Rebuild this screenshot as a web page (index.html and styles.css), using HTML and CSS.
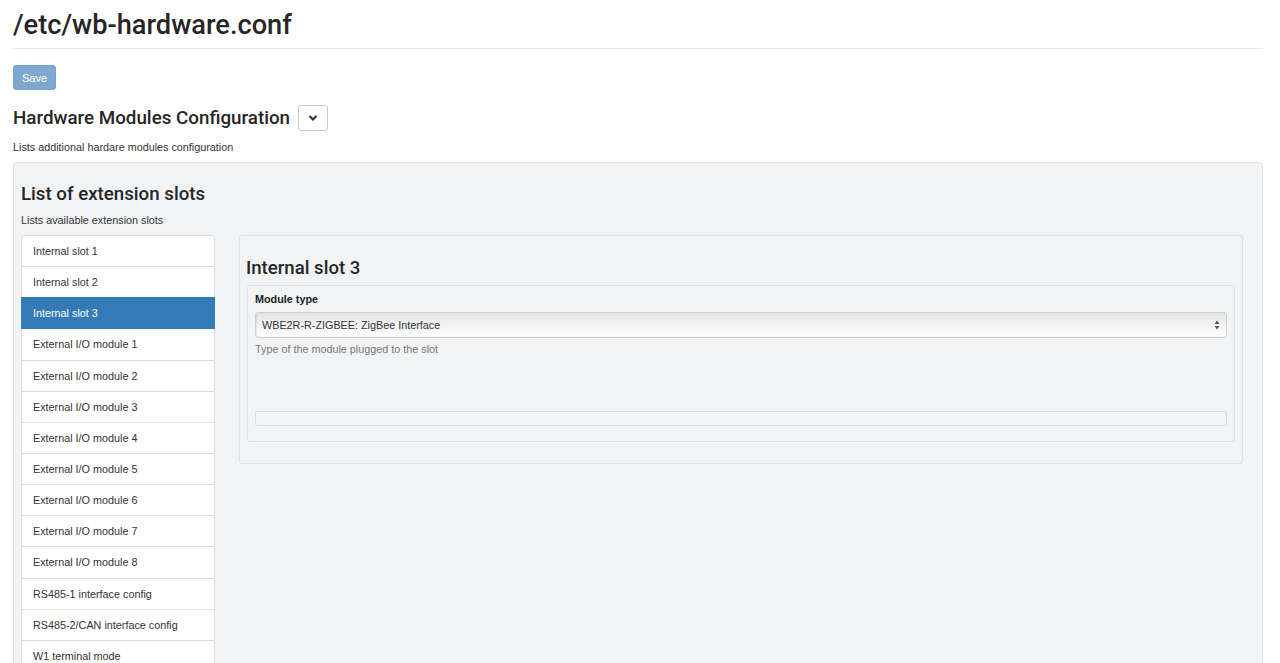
FILE: index.html
```html
<!DOCTYPE html>
<html lang="en">
<head>
    <meta charset="UTF-8">
    <title>/etc/wb-hardware.conf</title>
    <link rel="stylesheet" href="styles.css">
</head>
<body>
<div class="page">
    <h1 class="page-title">/etc/wb-hardware.conf</h1>

    <button class="btn-save" disabled>Save</button>

    <div class="section-head">
        <h2>Hardware Modules Configuration</h2>
        <button class="btn-toggle">
            <svg width="10" height="8" viewBox="0 0 10 8"><path d="M1.5 2 L5 5.5 L8.5 2" fill="none" stroke="#333" stroke-width="2.2"/></svg>
        </button>
    </div>
    <p class="section-desc">Lists additional hardare modules configuration</p>

    <div class="well">
        <h3 class="well-title">List of extension slots</h3>
        <p class="well-desc">Lists available extension slots</p>

        <div class="slots">
            <ul class="slot-list">
                <li>Internal slot 1</li>
                <li>Internal slot 2</li>
                <li class="active">Internal slot 3</li>
                <li>External I/O module 1</li>
                <li>External I/O module 2</li>
                <li>External I/O module 3</li>
                <li>External I/O module 4</li>
                <li>External I/O module 5</li>
                <li>External I/O module 6</li>
                <li>External I/O module 7</li>
                <li>External I/O module 8</li>
                <li>RS485-1 interface config</li>
                <li>RS485-2/CAN interface config</li>
                <li>W1 terminal mode</li>
            </ul>

            <div class="slot-panel">
                <h3 class="slot-title">Internal slot 3</h3>
                <div class="field-box">
                    <label class="field-label">Module type</label>
                    <div class="select">
                        <span>WBE2R-R-ZIGBEE: ZigBee Interface</span>
                        <svg class="select-arrows" width="6" height="10" viewBox="0 0 6 10"><path d="M3 0.5 L5.5 4 L0.5 4 Z M3 9.5 L5.5 6 L0.5 6 Z" fill="#555"/></svg>
                    </div>
                    <p class="field-help">Type of the module plugged to the slot</p>
                    <div class="empty-bar"></div>
                </div>
            </div>
        </div>
    </div>
</div>
</body>
</html>
```

FILE: styles.css
```css
body {
    margin: 0;
    font-family: "Liberation Sans", Arial, sans-serif;
    font-size: 10.8px;
    color: #333;
    background-color: #fff;
}
h1, h2, h3 {
    font-family: Roboto, "Liberation Sans", sans-serif;
    font-weight: 500;
    color: #262626;
}
.page {
    padding: 0 17px 0 13px;
    height: 663px;
    overflow: hidden;
}
.page-title {
    margin: 0;
    padding-top: 10px;
    padding-bottom: 7px;
    font-size: 27.2px;
    line-height: 31px;
    border-bottom: 1px solid #e8e8e8;
}
.btn-save {
    display: block;
    margin-top: 16px;
    width: 43px;
    height: 25px;
    padding: 0;
    font-family: inherit;
    font-size: 11px;
    color: #fff;
    background-color: #7fa8d1;
    border: 1px solid #7aa2cc;
    border-radius: 3px;
}
.section-head {
    display: flex;
    align-items: center;
    gap: 8px;
    margin-top: 15px;
}
.section-head h2 {
    margin: 0;
    font-size: 18.8px;
    line-height: 25px;
}
.btn-toggle {
    width: 30px;
    height: 26px;
    padding: 0;
    display: flex;
    align-items: center;
    justify-content: center;
    background-color: #fff;
    border: 1px solid #ccc;
    border-radius: 3px;
}
.section-desc {
    margin: 9px 0 8px;
    line-height: 14px;
}
.well {
    background-color: #f2f3f5;
    border: 1px solid #e1e2e4;
    border-radius: 3px;
    padding: 18px 19px 20px 7px;
}
.well-title {
    margin: 0;
    font-size: 18.7px;
    line-height: 27px;
}
.well-desc {
    margin: 5px 0 8px;
    line-height: 14px;
}
.slots {
    display: flex;
    align-items: flex-start;
    gap: 24px;
}
.slot-list {
    list-style: none;
    margin: 0;
    padding: 0;
    width: 194px;
    flex-shrink: 0;
}
.slot-list li {
    height: 30.15px;
    line-height: 30px;
    padding: 0 11px;
    background-color: #fff;
    border: 1px solid #ddd;
    margin-bottom: -1px;
    color: #333;
}
.slot-list li:first-child {
    border-radius: 3px 3px 0 0;
}
.slot-list li.active {
    background-color: #337ab7;
    border-color: #337ab7;
    color: #fff;
    position: relative;
}
.slot-panel {
    flex: 1;
    background-color: #f2f3f5;
    border: 1px solid #dfe0e2;
    border-radius: 3px;
    padding: 20px 7px 21px 6px;
}
.slot-title {
    margin: 0 0 5px;
    font-size: 18.6px;
    line-height: 24px;
}
.field-box {
    margin-left: 1px;
    border: 1px solid #dfe0e2;
    border-radius: 3px;
    padding: 6px 7px 15px;
}
.field-label {
    display: block;
    font-weight: bold;
    line-height: 15px;
    color: #222;
}
.select {
    display: flex;
    align-items: center;
    justify-content: space-between;
    margin-top: 5px;
    height: 24px;
    padding: 0 6px;
    border: 1px solid #cfcfcf;
    border-radius: 3px;
    background: linear-gradient(#e4e5e6, #f4f4f5 55%, #fff);
    box-shadow: inset 1px 0 2px rgba(0,0,0,0.08);
    color: #333;
}
.field-help {
    margin: 5px 0 0;
    line-height: 12px;
    color: #777;
}
.empty-bar {
    margin-top: 56px;
    height: 13px;
    border: 1px solid #dcdddf;
    border-radius: 2px;
}
```
